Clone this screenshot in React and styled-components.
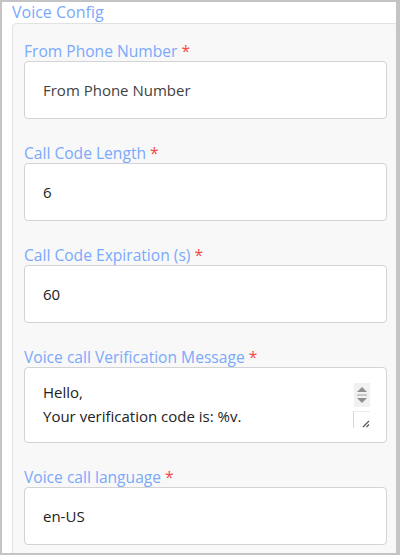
import React from "react";
import styled, { createGlobalStyle } from "styled-components";

const GlobalStyle = createGlobalStyle`
  html, body {
    margin: 0;
    padding: 0;
    background: #ffffff;
  }
  body {
    font-family: "Open Sans", "Noto Sans", sans-serif;
  }
`;

const Frame = styled.div`
  box-sizing: border-box;
  width: 400px;
  height: 555px;
  overflow: hidden;
  border-style: solid;
  border-color: #c4c4c4;
  border-width: 2px 4px 2px 2px;
  padding-left: 10px;
  background: #ffffff;
`;

const Legend = styled.div`
  height: 21px;
  line-height: 21px;
  font-size: 16px;
  color: #7ba9fb;
`;

const FieldSet = styled.div`
  margin-right: -3px;
  border: 1px solid #e2e2e2;
  border-radius: 4px;
  background: #f8f8f8;
  padding: 17px 11px 30px 11px;
  display: flex;
  flex-direction: column;
  gap: 24px;
`;

const Field = styled.div`
  display: flex;
  flex-direction: column;
`;

const Label = styled.label`
  height: 20px;
  line-height: 20px;
  font-size: 15.6px;
  color: #7ba9fb;
  white-space: nowrap;
`;

const Star = styled.span`
  color: #f24848;
  margin-left: 4px;
`;

const Input = styled.input`
  box-sizing: border-box;
  width: 100%;
  height: 58px;
  margin: 0;
  padding: 0 18px;
  border: 1px solid #d3d3d3;
  border-radius: 4px;
  background: #ffffff;
  font-family: inherit;
  font-size: 15px;
  color: #222222;
  outline: none;

  &::placeholder {
    color: #3f3f3f;
    opacity: 1;
  }
`;

const AreaBox = styled.div`
  position: relative;
  box-sizing: border-box;
  height: 76px;
  padding: 12px 15px 0 18px;
  border: 1px solid #d3d3d3;
  border-radius: 4px;
  background: #ffffff;
`;

const TextArea = styled.textarea`
  display: block;
  box-sizing: border-box;
  width: 100%;
  height: 48px;
  margin: 0;
  padding: 0;
  border: none;
  outline: none;
  resize: none;
  overflow: hidden;
  font-family: inherit;
  font-size: 15px;
  line-height: 24px;
  color: #222222;
  background: transparent;
`;

const Scroller = styled.div`
  position: absolute;
  top: 15px;
  right: 16px;
  width: 17px;
  display: flex;
  flex-direction: column;
  align-items: center;
`;

const Spin = styled.div`
  width: 16px;
  height: 24px;
  background: #f1f1f1;
  display: flex;
  align-items: center;
  justify-content: center;
`;

const Grip = styled.div`
  box-sizing: border-box;
  margin-top: 4px;
  align-self: flex-end;
  width: 17px;
  height: 17px;
  border-left: 1px solid #d6d6d6;
  border-top: 1px solid #ececec;
  display: flex;
  align-items: flex-end;
  justify-content: flex-end;
`;

const fields = [
  { label: "From Phone Number", placeholder: "From Phone Number" },
  { label: "Call Code Length", value: "6" },
  { label: "Call Code Expiration (s)", value: "60" },
  {
    label: "Voice call Verification Message",
    area: "Hello,\nYour verification code is: %v.",
  },
  { label: "Voice call language", value: "en-US" },
];

const SpinArrows = () => (
  <svg width="14" height="18" viewBox="0 0 14 18">
    <path d="M7 1 L12 6 L2 6 Z" fill="#909090" />
    <rect x="2" y="8.5" width="10" height="1" fill="#a0a0a0" />
    <path d="M2 12 L12 12 L7 17 Z" fill="#909090" />
  </svg>
);

const ResizeMark = () => (
  <svg width="9" height="9" viewBox="0 0 9 9">
    <path d="M8 2 L2 8 M8 5.5 L5.5 8" stroke="#555" strokeWidth="1.2" />
  </svg>
);

const App = () => {
  return (
    <>
      <GlobalStyle />
      <Frame>
        <Legend>Voice Config</Legend>
        <FieldSet>
          {fields.map((f) => (
            <Field key={f.label}>
              <Label>
                {f.label}
                <Star>*</Star>
              </Label>
              {f.area ? (
                <AreaBox>
                  <TextArea defaultValue={f.area} />
                  <Scroller>
                    <Spin>
                      <SpinArrows />
                    </Spin>
                    <Grip>
                      <ResizeMark />
                    </Grip>
                  </Scroller>
                </AreaBox>
              ) : (
                <Input
                  placeholder={f.placeholder}
                  defaultValue={f.value}
                  readOnly
                />
              )}
            </Field>
          ))}
        </FieldSet>
      </Frame>
    </>
  );
};

export default App;
